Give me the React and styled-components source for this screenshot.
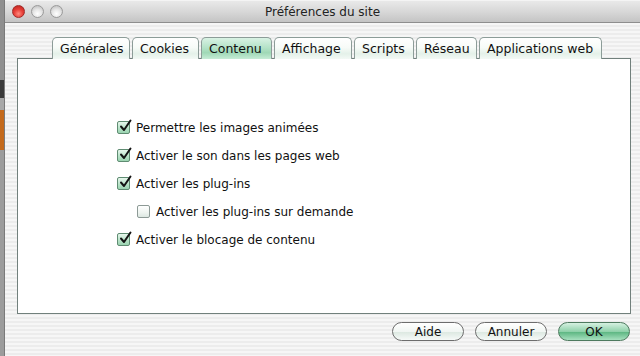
import React from 'react';
import styled, { createGlobalStyle } from 'styled-components';

const Global = createGlobalStyle`
  html, body {
    margin: 0;
    padding: 0;
    width: 640px;
    height: 356px;
    overflow: hidden;
    font-family: "DejaVu Sans", "Liberation Sans", sans-serif;
  }
`;

const Screen = styled.div`
  display: flex;
  width: 640px;
  height: 356px;
  background: #9a9a9a;
`;

const BackStrip = styled.div`
  width: 4px;
  flex: none;
  background: linear-gradient(180deg,
    #8f8f8f 0px, #8f8f8f 80px, #3a3a3a 80px, #3a3a3a 98px,
    #a8a8a8 98px, #a8a8a8 110px, #c46a1c 110px, #c46a1c 150px,
    #9c9c9c 150px, #9c9c9c 356px);
`;

const Window = styled.div`
  flex: 1;
  display: flex;
  flex-direction: column;
  border-left: 1px solid #7a7a7a;
`;

const TitleBar = styled.div`
  height: 21px;
  display: flex;
  align-items: center;
  position: relative;
  background: linear-gradient(180deg, #e9e9e9 0%, #d6d6d6 55%, #c4c4c4 100%);
  border-bottom: 1px solid #8e8e8e;
  border-top: 1px solid #f4f4f4;
`;

const Lights = styled.div`
  display: flex;
  gap: 6px;
  padding-left: 7px;
`;

const Light = styled.span`
  width: 13px;
  height: 13px;
  border-radius: 50%;
  box-sizing: border-box;
  border: 1px solid ${p => (p.$red ? '#a12a28' : '#9a9a9a')};
  background: ${p =>
    p.$red
      ? 'radial-gradient(circle at 50% 70%, #ff8a7e 0%, #e8413a 45%, #b82019 100%)'
      : 'radial-gradient(circle at 50% 70%, #ffffff 0%, #e6e6e6 45%, #b6b6b6 100%)'};
`;

const Title = styled.div`
  position: absolute;
  left: 0;
  right: 0;
  text-align: center;
  font-size: 12px;
  color: #222;
  pointer-events: none;
`;

const Body = styled.div`
  flex: 1;
  display: flex;
  flex-direction: column;
  padding: 14px 9px 0 12px;
  background: repeating-linear-gradient(180deg, #f6f6f6 0px, #f6f6f6 2px, #ececec 2px, #ececec 4px);
`;

const Tabs = styled.div`
  display: flex;
  gap: 2px;
  padding-left: 35px;
  height: 22px;
  position: relative;
  z-index: 1;
`;

const Tab = styled.div`
  box-sizing: border-box;
  width: ${p => p.$w}px;
  height: 22px;
  padding-left: 7px;
  display: flex;
  align-items: center;
  font-size: 12.5px;
  color: #111;
  border: 1px solid #8c9c98;
  border-bottom: none;
  border-radius: 5px 5px 0 0;
  background: ${p =>
    p.$active
      ? 'linear-gradient(180deg, #d9f2e4 0%, #b5e3c8 45%, #9fd8b6 70%, #c6ecd6 100%)'
      : 'linear-gradient(180deg, #ffffff 0%, #f7fbf8 45%, #e4f1e9 75%, #f3f9f5 100%)'};
`;

const Panel = styled.div`
  box-sizing: border-box;
  height: 256px;
  margin-top: -1px;
  border: 1px solid #71807c;
  background: #ffffff;
  padding: 62px 0 0 99px;
  display: flex;
  flex-direction: column;
  gap: 15px;
`;

const Row = styled.label`
  display: flex;
  align-items: center;
  gap: 6px;
  height: 13px;
  font-size: 12px;
  color: #111;
  padding-left: ${p => (p.$indent ? 20 : 0)}px;
`;

const Box = styled.span`
  box-sizing: border-box;
  width: 13px;
  height: 13px;
  flex: none;
  border: 1px solid ${p => (p.$on ? '#5f8c72' : '#8d9a96')};
  border-radius: 2px;
  position: relative;
  background: ${p =>
    p.$on
      ? 'linear-gradient(180deg, #e6f6ec 0%, #b9e3c9 55%, #9ad3b0 100%)'
      : 'linear-gradient(180deg, #ffffff 0%, #eef4f0 60%, #dde8e2 100%)'};
  svg {
    position: absolute;
    left: 1px;
    top: -3px;
  }
`;

const Footer = styled.div`
  display: flex;
  justify-content: flex-end;
  gap: 11px;
  padding: 8px 1px 0 0;
`;

const Button = styled.button`
  box-sizing: border-box;
  width: 72px;
  height: 19px;
  border-radius: 10px;
  border: 1px solid ${p => (p.$primary ? '#4e7a5f' : '#6d6d6d')};
  font-family: inherit;
  font-size: 12px;
  color: #111;
  padding: 0;
  background: ${p =>
    p.$primary
      ? 'linear-gradient(180deg, #d6f1e1 0%, #8fd1aa 50%, #5fb884 55%, #a7e0bf 100%)'
      : 'linear-gradient(180deg, #ffffff 0%, #f1f6f3 50%, #dde9e2 55%, #f6faf8 100%)'};
`;

const Check = () => (
  <svg width="13" height="14" viewBox="0 0 13 14">
    <path d="M2 7.5 L5 11 L11.5 1.5" fill="none" stroke="#141414" strokeWidth="2" strokeLinecap="round" strokeLinejoin="round" />
  </svg>
);

const tabs = [
  ['Générales', 78],
  ['Cookies', 67],
  ['Contenu', 71],
  ['Affichage', 78],
  ['Scripts', 60],
  ['Réseau', 61],
  ['Applications web', 123],
];

const options = [
  ['Permettre les images animées', true],
  ['Activer le son dans les pages web', true],
  ['Activer les plug-ins', true],
  ['Activer les plug-ins sur demande', false, true],
  ['Activer le blocage de contenu', true],
];

export default function App() {
  return (
    <>
      <Global />
      <Screen>
        <BackStrip />
        <Window>
          <TitleBar>
            <Lights>
              <Light $red />
              <Light />
              <Light />
            </Lights>
            <Title>Préférences du site</Title>
          </TitleBar>
          <Body>
            <Tabs>
              {tabs.map(([t, w]) => (
                <Tab key={t} $w={w} $active={t === 'Contenu'}>{t}</Tab>
              ))}
            </Tabs>
            <Panel>
              {options.map(([label, on, indent]) => (
                <Row key={label} $indent={indent}>
                  <Box $on={on}>{on && <Check />}</Box>
                  {label}
                </Row>
              ))}
            </Panel>
            <Footer>
              <Button>Aide</Button>
              <Button>Annuler</Button>
              <Button $primary>OK</Button>
            </Footer>
          </Body>
        </Window>
      </Screen>
    </>
  );
}
